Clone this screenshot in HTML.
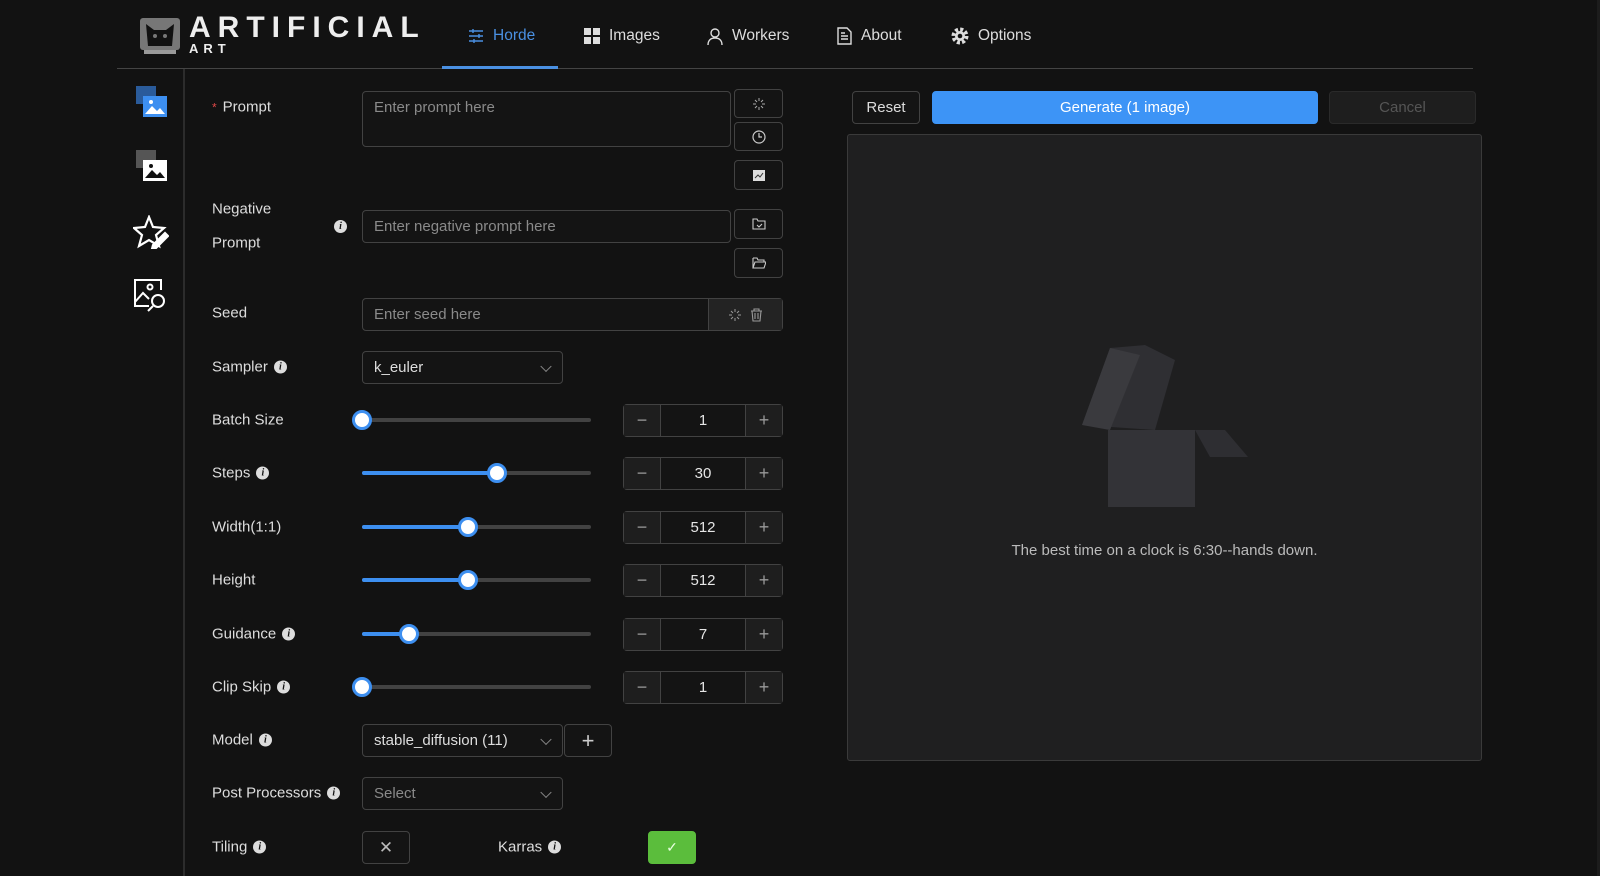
<!DOCTYPE html>
<html><head><meta charset="utf-8"><style>
*{box-sizing:border-box;margin:0;padding:0}
body{width:1600px;height:876px;background:#121212;font-family:"Liberation Sans",sans-serif;color:#e6e6e6;position:relative;overflow:hidden}
.a{position:absolute}
.lbl{position:absolute;left:212px;font-size:15px;color:#ddd;transform:translateY(-50%);white-space:nowrap;display:flex;align-items:center;gap:6px}
.info{display:inline-block;width:13px;height:13px;border-radius:50%;background:#ddd;color:#111;font-size:10px;font-weight:bold;font-style:italic;text-align:center;line-height:13px;font-family:"Liberation Serif",serif}
.box{position:absolute;border:1px solid #424242;border-radius:4px;background:#141414}
.ph{color:#8a8a8a;font-size:15px}
.btn{position:absolute;border:1px solid #424242;border-radius:4px;background:#141414;display:flex;align-items:center;justify-content:center}
.track{position:absolute;left:362px;width:229px;height:4px;border-radius:2px;background:#424242}
.fill{position:absolute;left:0;top:0;height:4px;border-radius:2px;background:#3d8ff0}
.knob{position:absolute;width:20px;height:20px;border-radius:50%;background:#fff;border:3px solid #3d8ff0;top:-8px;margin-left:-10px}
.num{position:absolute;left:623px;width:160px;height:33px;border:1px solid #424242;border-radius:4px;background:#141414;display:flex}
.num .s{width:36px;background:#1e1e1e;display:flex;align-items:center;justify-content:center;color:#999;font-size:18px}
.num .v{flex:1;border-left:1px solid #424242;border-right:1px solid #424242;display:flex;align-items:center;justify-content:center;font-size:15px;color:#e6e6e6}
.nav{position:absolute;top:36px;transform:translateY(-50%);font-size:15.5px;color:#ddd;display:flex;align-items:center;gap:9px}
.chev{position:absolute;right:12px;top:50%;width:8px;height:8px;border-right:1.3px solid #888;border-bottom:1.3px solid #888;transform:translateY(-70%) rotate(45deg)}
</style></head><body>
<!-- logo -->
<svg class="a" style="left:138px;top:16px" width="44" height="40" viewBox="0 0 44 40">
<rect x="2" y="2" width="40" height="32" rx="3" fill="#777"/>
<rect x="6" y="34" width="32" height="4" fill="#999"/>
<path d="M10 30 L8 8 L16 14 L28 14 L36 8 L34 30 Z" fill="#111"/>
<circle cx="17" cy="20" r="2" fill="#777"/><circle cx="27" cy="20" r="2" fill="#777"/>
</svg>
<div class="a" style="left:189px;top:13px;font-size:30px;font-weight:bold;letter-spacing:7px;color:#eee;line-height:30px">ARTIFICIAL</div>
<div class="a" style="left:189px;top:41px;font-size:13px;font-weight:bold;letter-spacing:5px;color:#eee">ART</div>

<div class="nav" style="left:468px;color:#4a90e2">
<svg width="16" height="16" viewBox="0 0 16 16" stroke="#4a90e2" stroke-width="1.4" fill="none"><path d="M1 3h14M1 8h14M1 13h14"/><path d="M5 1v4M11 6v4M6 11v4"/></svg>Horde</div>
<div class="nav" style="left:584px"><svg width="16" height="16" viewBox="0 0 16 16" fill="#ddd"><rect x="0" y="0" width="7" height="7"/><rect x="9" y="0" width="7" height="7"/><rect x="0" y="9" width="7" height="7"/><rect x="9" y="9" width="7" height="7"/></svg>Images</div>
<div class="nav" style="left:707px"><svg width="16" height="17" viewBox="0 0 16 17" stroke="#ddd" stroke-width="1.4" fill="none"><circle cx="8" cy="5" r="4"/><path d="M1 17c0-5 3-7 7-7s7 2 7 7"/></svg>Workers</div>
<div class="nav" style="left:837px"><svg width="15" height="18" viewBox="0 0 15 18" stroke="#ddd" stroke-width="1.4" fill="none"><path d="M1 1h9l4 4v12H1z"/><path d="M4 9h7M4 12h7M4 6h4"/></svg>About</div>
<div class="nav" style="left:951px"><svg width="18" height="18" viewBox="0 0 18 18"><circle cx="9" cy="9" r="6.5" fill="none" stroke="#ddd" stroke-width="4" stroke-dasharray="3 2.1"/><circle cx="9" cy="9" r="5" fill="#ddd"/><circle cx="9" cy="9" r="2.3" fill="#121212"/></svg>Options</div>
<div class="a" style="left:117px;top:68px;width:1356px;height:1px;background:#444"></div>
<div class="a" style="left:442px;top:66px;width:116px;height:3px;background:#4a90e2"></div>

<!-- sidebar -->
<div class="a" style="left:183px;top:69px;width:2px;height:807px;background:#2c2c2c"></div>
<svg class="a" style="left:134px;top:86px" width="34" height="32" viewBox="0 0 34 32"><rect x="2" y="0" width="20" height="18" fill="#2a5b9a"/><rect x="9" y="10" width="24" height="21" fill="#3d8ff0"/><path d="M11 28l7-8 5 5 3-3 5 6z" fill="#fff"/><circle cx="17" cy="16" r="2" fill="#fff"/></svg>
<svg class="a" style="left:134px;top:150px" width="34" height="32" viewBox="0 0 34 32"><rect x="2" y="0" width="20" height="18" fill="#555"/><rect x="9" y="10" width="24" height="21" fill="#fff"/><path d="M11 28l7-8 5 5 3-3 5 6z" fill="#111"/><circle cx="17" cy="16" r="2" fill="#111"/></svg>
<svg class="a" style="left:133px;top:215px" width="36" height="34" viewBox="0 0 36 34" fill="none" stroke="#fff" stroke-width="2.2"><path d="M16 2l4 10 11 1-8 7 3 11-10-6-10 6 3-11-8-7 11-1z"/><path d="M20 30l12-12 3 3-12 12-4 1z" fill="#fff"/></svg>
<svg class="a" style="left:133px;top:278px" width="36" height="34" viewBox="0 0 36 34" fill="none" stroke="#fff" stroke-width="2"><path d="M28 12V2H2v26h14"/><path d="M2 24l8-9 6 6"/><circle cx="17" cy="9" r="2.5"/><circle cx="25" cy="23" r="6"/><path d="M20 28l-5 5"/></svg>

<!-- labels -->
<div class="lbl" style="top:107px"><span style="color:#e04848;font-size:12px">*</span>Prompt</div>
<div class="lbl" style="top:209px">Negative</div>
<div class="lbl" style="top:243px">Prompt</div>
<span class="info a" style="left:334px;top:220px">i</span>
<div class="lbl" style="top:313px">Seed</div>
<div class="lbl" style="top:367px">Sampler <span class="info">i</span></div>
<div class="lbl" style="top:420px">Batch Size</div>
<div class="lbl" style="top:473px">Steps <span class="info">i</span></div>
<div class="lbl" style="top:527px">Width(1:1)</div>
<div class="lbl" style="top:580px">Height</div>
<div class="lbl" style="top:634px">Guidance <span class="info">i</span></div>
<div class="lbl" style="top:687px">Clip Skip <span class="info">i</span></div>
<div class="lbl" style="top:740px">Model <span class="info">i</span></div>
<div class="lbl" style="top:793px">Post Processors <span class="info">i</span></div>
<div class="lbl" style="top:847px">Tiling <span class="info">i</span></div>
<div class="lbl" style="top:847px;left:498px">Karras <span class="info">i</span></div>

<!-- prompt -->
<div class="box" style="left:362px;top:91px;width:369px;height:56px;padding:7px 11px"><span class="ph">Enter prompt here</span></div>
<div class="box" style="left:362px;top:210px;width:369px;height:33px;padding:7px 11px"><span class="ph">Enter negative prompt here</span></div>
<div class="btn" style="left:734px;top:89px;width:49px;height:29px"><svg width="14" height="14" viewBox="0 0 14 14" stroke="#aaa" stroke-width="1"><path d="M7 1v3M7 10v3M1 7h3M10 7h3M3 3l2 2M9 9l2 2M11 3L9 5M3 11l2-2"/></svg></div>
<div class="btn" style="left:734px;top:122px;width:49px;height:29px"><svg width="14" height="14" viewBox="0 0 14 14" stroke="#ccc" stroke-width="1.2" fill="none"><circle cx="7" cy="7" r="6"/><path d="M7 3v4h3"/></svg></div>
<div class="btn" style="left:734px;top:160px;width:49px;height:30px"><svg width="12" height="11" viewBox="0 0 12 11"><rect width="12" height="11" fill="#ddd"/><path d="M2 8l3-3 2 2 3-4" stroke="#333" fill="none"/></svg></div>
<div class="btn" style="left:734px;top:209px;width:49px;height:30px"><svg width="14" height="12" viewBox="0 0 14 12" stroke="#ccc" stroke-width="1.1" fill="none"><path d="M1 1h4l1 2h7v8H1z"/><path d="M5 7l2 2 3-3"/></svg></div>
<div class="btn" style="left:734px;top:248px;width:49px;height:30px"><svg width="14" height="12" viewBox="0 0 14 12" stroke="#ccc" stroke-width="1.1" fill="none"><path d="M1 1h4l1 2h6v2M1 11V1M1 11l2-6h11l-2 6z"/></svg></div>

<!-- seed -->
<div class="box" style="left:362px;top:298px;width:421px;height:33px;padding:7px 11px"><span class="ph">Enter seed here</span></div>
<div class="a" style="left:708px;top:299px;width:74px;height:31px;background:#232323;border-left:1px solid #424242;display:flex;align-items:center;justify-content:center;gap:8px">
<svg width="14" height="14" viewBox="0 0 14 14" stroke="#999" stroke-width="1"><path d="M7 1v3M7 10v3M1 7h3M10 7h3M3 3l2 2M9 9l2 2M11 3L9 5M3 11l2-2"/></svg>
<svg width="13" height="14" viewBox="0 0 13 14" stroke="#999" stroke-width="1.1" fill="none"><path d="M1 3h11M4 3V1h5v2M2 3l1 10h7l1-10M5 5v6M8 5v6"/></svg></div>

<!-- sampler -->
<div class="box" style="left:362px;top:351px;width:201px;height:33px;padding:7px 11px;font-size:15px;color:#ddd">k_euler<span class="chev"></span></div>

<!-- sliders -->
<div class="track" style="top:418px"><div class="knob" style="left:0px"></div></div>
<div class="track" style="top:471px"><div class="fill" style="width:135px"></div><div class="knob" style="left:135px"></div></div>
<div class="track" style="top:525px"><div class="fill" style="width:106px"></div><div class="knob" style="left:106px"></div></div>
<div class="track" style="top:578px"><div class="fill" style="width:106px"></div><div class="knob" style="left:106px"></div></div>
<div class="track" style="top:632px"><div class="fill" style="width:47px"></div><div class="knob" style="left:47px"></div></div>
<div class="track" style="top:685px"><div class="knob" style="left:0px"></div></div>

<div class="num" style="top:404px"><div class="s">−</div><div class="v">1</div><div class="s">+</div></div>
<div class="num" style="top:457px"><div class="s">−</div><div class="v">30</div><div class="s">+</div></div>
<div class="num" style="top:511px"><div class="s">−</div><div class="v">512</div><div class="s">+</div></div>
<div class="num" style="top:564px"><div class="s">−</div><div class="v">512</div><div class="s">+</div></div>
<div class="num" style="top:618px"><div class="s">−</div><div class="v">7</div><div class="s">+</div></div>
<div class="num" style="top:671px"><div class="s">−</div><div class="v">1</div><div class="s">+</div></div>

<!-- model -->
<div class="box" style="left:362px;top:724px;width:201px;height:33px;padding:7px 11px;font-size:15px;color:#ddd">stable_diffusion (11)<span class="chev"></span></div>
<div class="btn" style="left:564px;top:724px;width:48px;height:33px;font-size:22px;color:#ccc;font-weight:300">+</div>
<div class="box" style="left:362px;top:777px;width:201px;height:33px;padding:7px 11px"><span class="ph">Select</span><span class="chev"></span></div>
<div class="btn" style="left:362px;top:831px;width:48px;height:33px;color:#bbb;font-size:17px">✕</div>
<div class="btn" style="left:648px;top:831px;width:48px;height:33px;background:#5bbd3c;border-color:#5bbd3c;color:#e8ffe0;font-size:14px">✓</div>

<!-- right -->
<div class="btn" style="left:852px;top:91px;width:68px;height:33px;font-size:15px;color:#ddd">Reset</div>
<div class="btn" style="left:932px;top:91px;width:386px;height:33px;background:#3d94f6;border-color:#3d94f6;font-size:15px;color:#fff">Generate (1 image)</div>
<div class="btn" style="left:1329px;top:91px;width:147px;height:33px;background:#1e1e1e;border-color:#2a2a2a;font-size:15px;color:#555">Cancel</div>
<div class="a" style="left:847px;top:134px;width:635px;height:627px;background:#1f1f20;border:1px solid #3a3a3a;border-radius:3px"></div>
<svg class="a" style="left:1080px;top:345px" width="170" height="165" viewBox="0 0 170 165">
<path d="M30 3 L65 0 L95 15 L75 85 L2 80 Z" fill="#2f2f33"/>
<path d="M30 3 L2 80 L30 85 L60 10 Z" fill="#3a3a3e"/>
<rect x="28" y="85" width="87" height="77" fill="#333337"/>
<path d="M115 85 L145 85 L168 112 L130 112 Z" fill="#2e2e32"/>
</svg>
<div class="a" style="left:847px;top:542px;width:635px;text-align:center;font-size:15px;color:#bbb">The best time on a clock is 6:30--hands down.</div>
<div class="a" style="left:1597px;top:0;width:3px;height:876px;background:#1c1c1c"></div>
</body></html>
